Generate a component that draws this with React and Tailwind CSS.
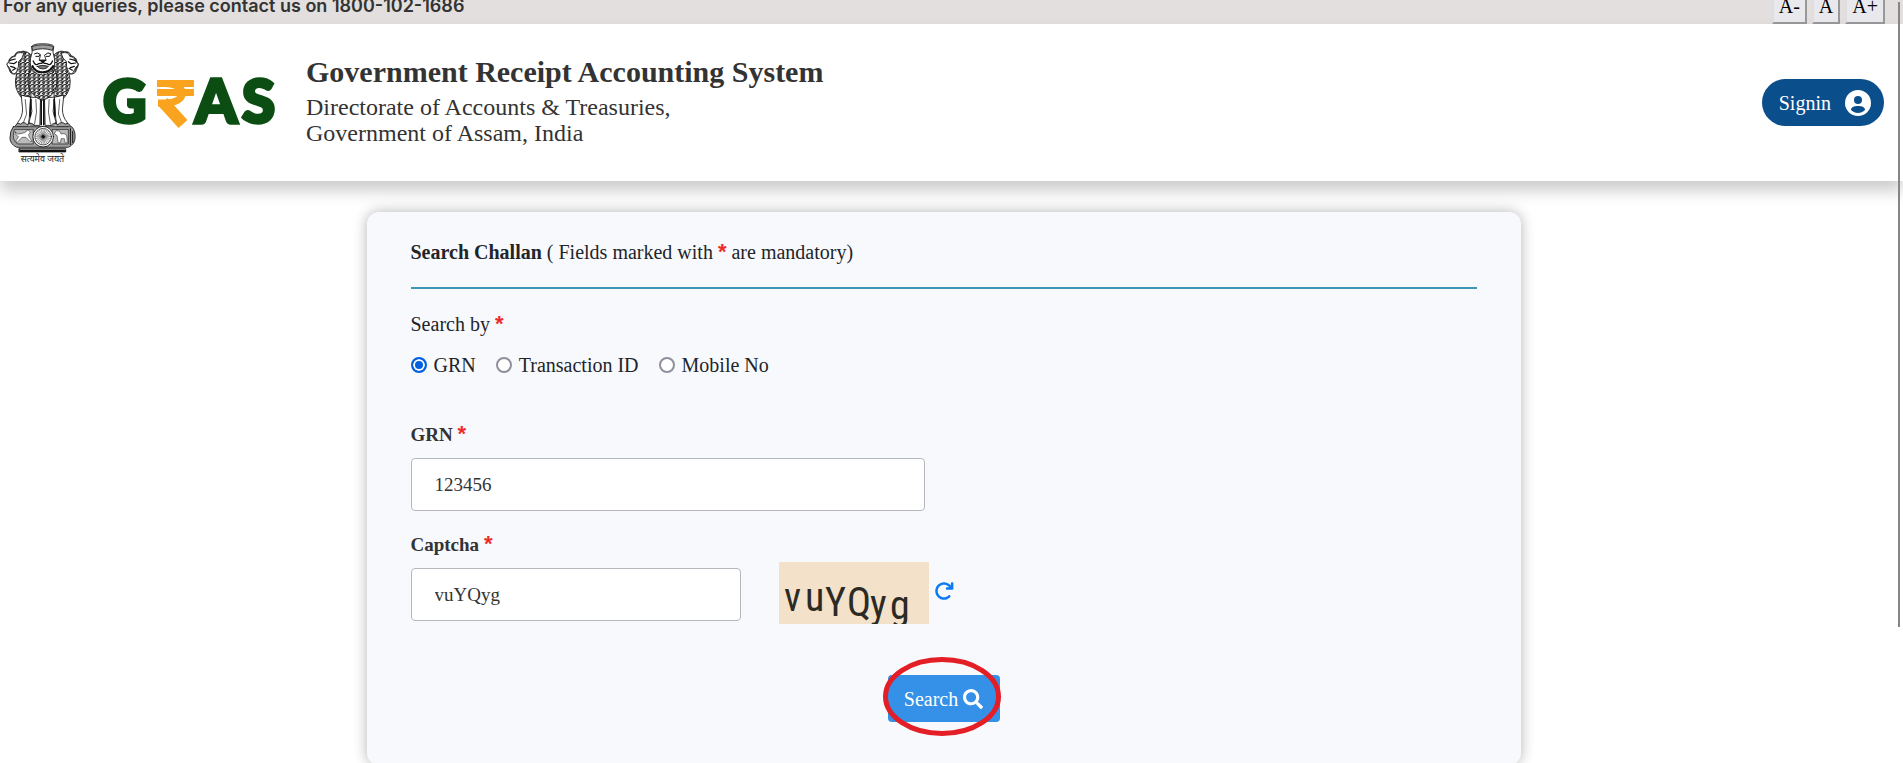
import { useState } from "react";
import { FaSearch } from "react-icons/fa";
import { FaArrowRotateRight } from "react-icons/fa6";

const SPOKES = Array.from({ length: 24 }, (_, i) => (i * Math.PI) / 12);

function Emblem() {
  return (
    <svg viewBox="15 40 226 365" className="h-[122px] w-[75px] shrink-0" role="img" aria-label="State emblem">
      <defs>
        <pattern id="mane" width="14" height="11" patternUnits="userSpaceOnUse">
          <rect width="14" height="11" fill="#fff" />
          <path d="M0 1 Q5 1 7 8 Q9 1 14 1 M0 7 Q4 7 7 13" fill="none" stroke="#111" strokeWidth="3" />
        </pattern>
        <pattern id="shade" width="5" height="5" patternUnits="userSpaceOnUse">
          <rect width="5" height="5" fill="#e4e4e4" />
          <path d="M0 0 L5 5 M0 5 L5 0" stroke="#333" strokeWidth="1" />
        </pattern>
      </defs>
      <g stroke="#111" strokeWidth="2.5" strokeLinejoin="round" strokeLinecap="round" fill="#fff">
        {/* side lions */}
        <path d="M92 76 Q76 62 62 68 Q48 66 44 80 Q28 84 26 98 Q18 106 24 114 Q28 120 30 128 Q36 138 50 134 Q44 156 48 176 Q54 196 66 208 L92 208 Z" fill="url(#mane)" />
        <path d="M164 76 Q180 62 194 68 Q210 66 214 80 Q230 84 232 98 Q240 106 234 114 Q230 120 228 128 Q222 138 208 134 Q214 156 210 176 Q204 196 192 208 L164 208 Z" fill="url(#mane)" />
        <path d="M72 72 Q48 66 46 82 Q30 84 28 98 Q16 104 24 112 Q28 114 30 120 L38 134 Q46 138 50 128 Q58 112 56 98 Q68 90 72 72 Z" />
        <path d="M184 72 Q208 66 210 82 Q226 84 228 98 Q240 104 232 112 Q228 114 226 120 L218 134 Q210 138 206 128 Q198 112 200 98 Q188 90 184 72 Z" />
        <path d="M30 94 L46 90 M28 102 L42 104 L50 98 M32 112 L44 116 M38 124 L48 118 M226 94 L210 90 M228 102 L214 104 L206 98 M224 112 L212 116 M218 124 L208 118" strokeWidth="3.5" />
        {/* legs */}
        <path d="M64 200 L68 240 Q68 264 54 280 L50 292 H84 L88 270 L92 206 Z" />
        <path d="M192 200 L188 240 Q188 264 202 280 L206 292 H172 L168 270 L164 206 Z" />
        <path d="M92 206 L96 248 L88 278 L92 290 H120 L122 208 Z M134 208 L136 290 H164 L168 278 L160 248 L164 206 Z" />
        <path d="M76 212 L80 256 L68 288 M108 212 L110 250 L104 286 M148 212 L146 250 L152 286 M180 212 L176 256 L188 288" fill="none" strokeWidth="2" />
        <path d="M124 212 V288 M132 212 V288 M93 212 L91 262 M163 212 L165 262" strokeWidth="5" />
        <path d="M92 120 Q76 150 90 184 Q104 208 128 214 Q152 208 166 184 Q180 150 164 120 Z" fill="url(#mane)" />
        {/* face */}
        <path d="M96 52 Q98 44 128 44 Q158 44 162 52 Q156 68 164 88 Q168 112 156 126 Q140 138 128 138 Q112 138 100 126 Q88 112 92 88 Q100 68 96 52 Z" />
        <path d="M97 52 Q128 42 161 52 L158 64 Q128 54 99 64 Z" fill="url(#shade)" />
        <path d="M104 74 Q112 68 121 76 L118 82 H108 M137 76 Q144 68 153 74 L149 82 H139" fill="none" strokeWidth="3" />
        <path d="M122 78 L118 94 H139 L134 78" fill="none" />
        <path d="M120 94 L129 101 L138 94 Z" fill="#111" />
        <path d="M100 96 Q106 112 116 104 Q124 104 129 101 Q134 104 142 104 Q152 112 158 96" fill="none" strokeWidth="4" />
        <path d="M112 112 Q129 106 146 112 Q140 120 129 120 Q118 120 112 112 Z" fill="#777" />
        <path d="M98 112 Q108 130 128 130 Q148 130 160 112" fill="none" strokeWidth="7" strokeDasharray="3 5" />
        {/* abacus */}
        <path d="M46 292 Q50 280 62 286 Q72 276 82 288 Q94 278 104 290 M154 290 Q164 278 174 288 Q186 276 196 286 Q208 280 212 292" fill="url(#shade)" />
        <path d="M40 294 H216 Q228 306 226 328 Q226 346 206 356 H50 Q30 346 30 328 Q30 306 40 294 Z" fill="url(#shade)" />
        <path d="M44 302 H100 V346 H54 Q40 338 40 322 Z M158 302 H206 V346 H158 Z" fill="#bbb" strokeWidth="2" />
        <path
          d="M46 310 Q52 320 62 315 Q76 314 84 304 L92 310 L86 318 L88 326 L97 338 L90 338 L78 326 L66 326 L52 341 L47 338 L56 324 Q46 322 46 310 Z"
          strokeWidth="1.5"
        />
        <path
          d="M164 314 L170 305 L180 308 L184 316 Q198 312 201 322 L203 342 H196 L194 330 H184 L182 342 H175 L172 322 Z"
          strokeWidth="1.5"
        />
        <path d="M212 300 V348 M219 308 V342" strokeWidth="3" />
        <circle cx="130" cy="324" r="31" />
        <circle cx="130" cy="324" r="25" strokeWidth="2" />
        {SPOKES.map((a) => (
          <line
            key={a}
            x1={130 + 5 * Math.cos(a)}
            y1={324 + 5 * Math.sin(a)}
            x2={130 + 23 * Math.cos(a)}
            y2={324 + 23 * Math.sin(a)}
            strokeWidth="1.3"
          />
        ))}
        <circle cx="130" cy="324" r="4" fill="#111" />
        <path d="M58 360 H198 V370 H58 Z" fill="#111" />
        <path d="M62 362 H196" stroke="#fff" strokeWidth="2" strokeDasharray="3 3" />
      </g>
      <text
        x="128"
        y="399"
        textAnchor="middle"
        fontSize="27"
        fill="#222"
        className="font-['Noto_Sans_Devanagari','Noto_Sans',sans-serif]"
      >
        सत्यमेव जयते
      </text>
    </svg>
  );
}

function GrasLogo() {
  return (
    <svg viewBox="0 0 176 54" className="h-[54px] w-[176px] shrink-0" role="img" aria-label="GRAS">
      <g
        fill="#0b4d12"
        stroke="#0b4d12"
        strokeWidth="3.5"
        fontSize="60"
        className="font-['Lato',sans-serif] font-black"
      >
        <text x="0" y="47">G</text>
        <text x="92" y="47">A</text>
        <text x="139" y="47">S</text>
      </g>
      <g fill="none" stroke="#faa31e" strokeWidth="7">
        <path d="M54 7.500 H91 M54 16.500 H91" />
        <path d="M62 7.500 C85 7.500 85 27 62 27 H55" />
        <path d="M60 26 L80 48" strokeWidth="12" />
      </g>
    </svg>
  );
}

function AccountIcon() {
  return (
    <svg viewBox="0 0 26 26" className="size-[26px]" aria-hidden="true">
      <circle cx="13" cy="13" r="13" fill="#fff" />
      <circle cx="13" cy="10" r="4" fill="#0a4e8c" />
      <path d="M6 20 C6 16.500 10 16 13 16 S20 16.500 20 20 C18 22 15.500 23 13 23 S8 22 6 20 Z" fill="#0a4e8c" />
    </svg>
  );
}

const CAPTCHA = [
  ["v", 5, 49],
  ["u", 26, 49],
  ["Y", 46, 54],
  ["Q", 68, 54],
  ["y", 91, 56],
  ["g", 111, 57],
];

function Captcha() {
  return (
    <svg viewBox="0 0 150 62" className="h-[62px] w-[150px] bg-[#f3e1ca]" role="img" aria-label="Captcha">
      <g
        fill="#2c2a24"
        fontSize="40"
        className="font-['Roboto_Condensed','Roboto',sans-serif]"
      >
        {CAPTCHA.map(([c, x, y]) => (
          <text key={x} x={x} y={y}>{c}</text>
        ))}
      </g>
    </svg>
  );
}

const Star = () => (
  <span className="font-['Liberation_Sans',sans-serif] text-[22px] leading-none font-bold text-[#ee2a2a]">*</span>
);

const OPTIONS = ["GRN", "Transaction ID", "Mobile No"];
const field = "h-[53px] w-full rounded border border-[#b5b8bc] bg-white px-[23px] text-[19px] text-[#333]";
const label = "h-6 text-[19px] leading-6 font-bold text-[#333]";

export default function App() {
  const [by, setBy] = useState("GRN");
  const [grn, setGrn] = useState("123456");
  const [captcha, setCaptcha] = useState("vuYQyg");

  return (
    <div className="relative h-screen overflow-hidden bg-white font-['Liberation_Serif',serif] text-xl text-[#212529]">
      <div className="flex h-6 items-end justify-between bg-[#e2dfde] pr-[18px] pl-[3px]">
        <p className="pb-2 font-['Inter','Liberation_Sans',sans-serif] text-lg leading-5 font-semibold text-[#333]">
          For any queries, please contact us on 1800-102-1686
        </p>
        <div className="flex items-end gap-[5px] text-black">
          {["A-", "A", "A+"].map((t) => (
            <button key={t} type="button" className="border-2 border-t-[#f4f4f6] border-r-[#999] border-b-[#999] border-l-[#dedee0] bg-[#e9e9ed] px-[5px] pb-1 leading-6">
              {t}
            </button>
          ))}
        </div>
      </div>

      <header className="relative flex h-[157px] items-center bg-white pr-[19px] pl-[5px] shadow-[0_10px_15px_rgba(0,0,0,0.2)]">
        <Emblem />
        <div className="pl-[23px]">
          <GrasLogo />
        </div>
        <div className="pb-1.5 pl-[27px] text-2xl leading-[26px] text-[#333]">
          <h1 className="pb-1 text-3xl leading-9 font-bold">Government Receipt Accounting System</h1>
          <p>Directorate of Accounts &amp; Treasuries,</p>
          <p>Government of Assam, India</p>
        </div>
        <button type="button" className="ml-auto flex h-[47px] items-center gap-3.5 rounded-full bg-[#0a4e8c] pr-[13px] pl-[17px] text-white">
          Signin
          <AccountIcon />
        </button>
      </header>

      <main className="pt-[31px] pr-4">
        <form
          className="mx-auto h-[553px] max-w-[1154px] rounded-xl bg-[#f8f9fd] px-11 pt-7 shadow-[0_0_14px_rgba(0,0,0,0.3)]"
          onSubmit={(e) => e.preventDefault()}
        >
          <h2 className="h-[49px] border-b-2 border-[#3f97b5] leading-6">
            <b>Search Challan</b> ( Fields marked with <Star /> are mandatory)
          </h2>
          <fieldset className="pt-[23px]">
            <legend className="float-left h-6 w-full leading-6">
              Search by <Star />
            </legend>
            <div className="clear-both flex gap-5 pt-[17px]">
              {OPTIONS.map((o) => (
                <label key={o} className="flex items-center gap-[7px] leading-6">
                  <input
                    type="radio"
                    name="by"
                    checked={by === o}
                    onChange={() => setBy(o)}
                    className="size-4 appearance-none rounded-full border-2 border-[#8f8f9d] bg-white checked:border-[#0060df] checked:bg-[#0060df] checked:shadow-[inset_0_0_0_2px_white]"
                  />
                  {o}
                </label>
              ))}
            </div>
          </fieldset>

          <div className="flex max-w-[514px] flex-col gap-[11px] pt-[46px]">
            <label htmlFor="grn" className={label}>
              GRN <Star />
            </label>
            <input id="grn" value={grn} onChange={(e) => setGrn(e.target.value)} className={field} />
          </div>

          <div className="flex items-end pt-[22px]">
            <div className="flex w-[330px] flex-col gap-[11px] pb-[3px]">
              <label htmlFor="captcha" className={label}>
                Captcha <Star />
              </label>
              <input id="captcha" value={captcha} onChange={(e) => setCaptcha(e.target.value)} className={field} />
            </div>
            <div className="ml-[38px] flex h-[62px] items-center gap-[5px]">
              <Captcha />
              <button type="button" aria-label="Refresh captcha" className="pb-1 text-[#0d7af0]">
                <FaArrowRotateRight />
              </button>
            </div>
          </div>

          <div className="flex justify-center pt-[51px]">
            <div className="relative">
              <button type="submit" className="flex h-[47px] w-28 items-center justify-center gap-[5px] rounded bg-[#3590e8] text-white">
                Search
                <FaSearch />
              </button>
              <svg viewBox="0 0 118 79" className="pointer-events-none absolute -top-[18px] -left-[5px] h-[79px] w-[118px]" aria-hidden="true">
                <ellipse cx="59" cy="39.500" rx="56.500" ry="37" fill="none" stroke="#e31e26" strokeWidth="5" />
              </svg>
            </div>
          </div>
        </form>
      </main>

      <div className="absolute top-0.5 right-[3px] h-[625px] w-0.5 bg-[#868686]" />
    </div>
  );
}
